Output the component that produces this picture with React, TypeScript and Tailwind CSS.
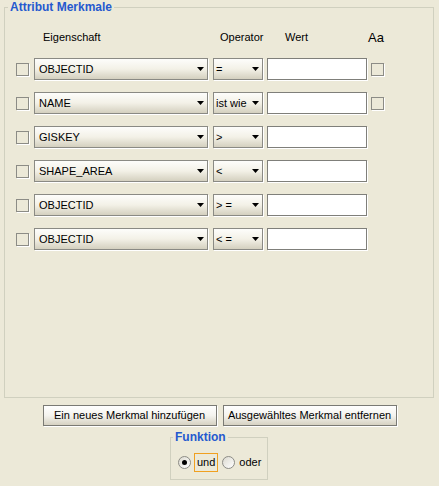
import React from 'react';

const rows = [
  { field: 'OBJECTID', op: '=', aa: true },
  { field: 'NAME', op: 'ist wie', aa: true },
  { field: 'GISKEY', op: '>', aa: false },
  { field: 'SHAPE_AREA', op: '<', aa: false },
  { field: 'OBJECTID', op: '> =', aa: false },
  { field: 'OBJECTID', op: '< =', aa: false },
];

const Arrow = () => (
  <svg width="7" height="4" viewBox="0 0 7 4" className="shrink-0">
    <path d="M0 0 H7 L3.5 4 Z" fill="#000" />
  </svg>
);

const CheckBox = () => (
  <div className="w-[13px] h-[13px] border border-[#8c8c86] shadow-[1px_1px_0_#ffffff] bg-[#ece9d8] shrink-0" />
);

const Combo = ({ text, width, pl }: { text: string; width: string; pl: string }) => (
  <div
    className={`${width} ${pl} h-[22px] flex items-center justify-between pr-[3px] border border-[#8a8a84] shadow-[1px_1px_0_#ffffff] bg-gradient-to-b from-[#fdfdfb] via-[#f3f1e7] to-[#d4d0bf] shrink-0`}
  >
    <span className="text-[11px] leading-[13px] text-black whitespace-nowrap">{text}</span>
    <Arrow />
  </div>
);

const Radio = ({ checked }: { checked: boolean }) => (
  <div className="w-[13px] h-[13px] rounded-full border border-[#8c8c86] bg-gradient-to-br from-[#dcdad0] to-white flex items-center justify-center shrink-0">
    {checked && <div className="w-[5px] h-[5px] rounded-full bg-black" />}
  </div>
);

export default function App() {
  return (
    <div className="w-[439px] h-[486px] bg-[#ece9d8] overflow-hidden" style={{ fontFamily: '"Liberation Sans", Arial, sans-serif' }}>
      {/* Attribut Merkmale */}
      <fieldset className="ml-[4px] w-[430px] h-[398px] border border-[#d0d0bf]">
        <legend className="ml-[3px] px-[2px] text-[12px] leading-[15px] font-bold text-[#2559cf]">Attribut Merkmale</legend>

        <div className="mt-[16px] flex items-center h-[13px] text-[11px] text-black">
          <div className="w-[38px]" />
          <div className="w-[177px]">Eigenschaft</div>
          <div className="w-[65px]">Operator</div>
          <div className="w-[83px]">Wert</div>
          <div className="text-[13px]">Aa</div>
        </div>

        <div className="mt-[14px] flex flex-col gap-[12px]">
          {rows.map((r, i) => (
            <div key={i} className="flex items-center h-[22px]">
              <div className="ml-[11px]">
                <CheckBox />
              </div>
              <div className="ml-[5px]">
                <Combo text={r.field} width="w-[174px]" pl="pl-[4px]" />
              </div>
              <div className="ml-[5px]">
                <Combo text={r.op} width="w-[50px]" pl="pl-[2px]" />
              </div>
              <div className="ml-[4px] w-[100px] h-[22px] bg-white border border-[#7f7f7a] shadow-[1px_1px_0_#ffffff]" />
              {r.aa && (
                <div className="ml-[4px]">
                  <CheckBox />
                </div>
              )}
            </div>
          ))}
        </div>
      </fieldset>

      <div className="mt-[7px] flex justify-center gap-[6px]">
        <button className="w-[174px] h-[21px] border border-[#7a7a74] shadow-[1px_1px_0_#ffffff] bg-gradient-to-b from-white via-[#f4f3ee] to-[#d6d2c2] text-[11px] text-black">
          Ein neues Merkmal hinzufügen
        </button>
        <button className="w-[174px] h-[21px] border border-[#7a7a74] shadow-[1px_1px_0_#ffffff] bg-gradient-to-b from-white via-[#f4f3ee] to-[#d6d2c2] text-[11px] text-black">
          Ausgewähltes Merkmal entfernen
        </button>
      </div>

      {/* Funktion */}
      <fieldset className="mt-[4px] ml-[170px] w-[98px] h-[50px] border border-[#d0d0bf]">
        <legend className="ml-[2px] px-[2px] text-[12px] leading-[15px] font-bold text-[#2559cf]">Funktion</legend>
        <div className="mt-[8px] flex items-center h-[19px] text-[11px] text-black">
          <div className="ml-[7px]">
            <Radio checked />
          </div>
          <div className="ml-[3px] h-[19px] px-[2px] border border-[#f0a020] flex items-center">und</div>
          <div className="ml-[4px]">
            <Radio checked={false} />
          </div>
          <span className="ml-[4px]">oder</span>
        </div>
      </fieldset>
    </div>
  );
}
